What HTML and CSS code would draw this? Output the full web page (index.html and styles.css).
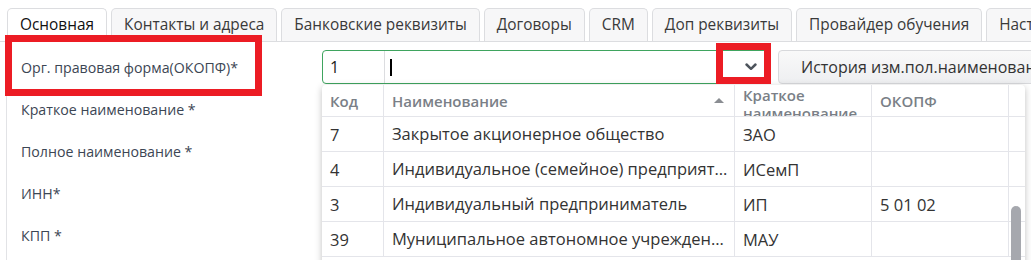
FILE: index.html
```html
<!DOCTYPE html>
<html lang="ru">
<head>
<meta charset="utf-8">
<link rel="stylesheet" href="styles.css">
</head>
<body>
<div class="page">
  <div class="tabs">
    <div class="tab active">Основная</div>
    <div class="tab">Контакты и адреса</div>
    <div class="tab">Банковские реквизиты</div>
    <div class="tab">Договоры</div>
    <div class="tab">CRM</div>
    <div class="tab">Доп реквизиты</div>
    <div class="tab">Провайдер обучения</div>
    <div class="tab">Настройки</div>
  </div>
  <div class="content">
    <div class="row">
      <div class="label">Орг. правовая форма(ОКОПФ)*</div>
      <div class="field">
        <div class="combo">
          <div class="combo-code">1</div>
          <div class="combo-text"><span class="caret"></span></div>
          <div class="combo-btn">
            <svg width="14" height="10" viewBox="0 0 14 10"><path d="M2.5 2.5 L7 6.8 L11.5 2.5" fill="none" stroke="#4d545c" stroke-width="2.5" stroke-linecap="round" stroke-linejoin="round"/></svg>
          </div>
        </div>
        <div class="history-btn">История изм.пол.наименования</div>
      </div>
    </div>
    <div class="row"><div class="label">Краткое наименование *</div></div>
    <div class="row"><div class="label">Полное наименование *</div></div>
    <div class="row"><div class="label">ИНН*</div></div>
    <div class="row"><div class="label">КПП *</div></div>
  </div>

  <div class="dropdown">
    <div class="grid">
      <div class="grid-row head">
        <div class="cell c-code">Код</div>
        <div class="cell c-name">Наименование<span class="sort"></span></div>
        <div class="cell c-short hdr-wrap">Краткое наименование</div>
        <div class="cell c-okopf">ОКОПФ</div>
        <div class="cell c-sb"></div>
      </div>
      <div class="grid-row">
        <div class="cell c-code">7</div>
        <div class="cell c-name">Закрытое акционерное общество</div>
        <div class="cell c-short">ЗАО</div>
        <div class="cell c-okopf"></div>
        <div class="cell c-sb"></div>
      </div>
      <div class="grid-row">
        <div class="cell c-code">4</div>
        <div class="cell c-name">Индивидуальное (семейное) предприятие</div>
        <div class="cell c-short">ИСемП</div>
        <div class="cell c-okopf"></div>
        <div class="cell c-sb"></div>
      </div>
      <div class="grid-row">
        <div class="cell c-code">3</div>
        <div class="cell c-name">Индивидуальный предприниматель</div>
        <div class="cell c-short">ИП</div>
        <div class="cell c-okopf">5 01 02</div>
        <div class="cell c-sb"></div>
      </div>
      <div class="grid-row">
        <div class="cell c-code">39</div>
        <div class="cell c-name">Муниципальное автономное учреждение</div>
        <div class="cell c-short">МАУ</div>
        <div class="cell c-okopf"></div>
        <div class="cell c-sb"></div>
      </div>
    </div>
    <div class="thumb"></div>
  </div>

  <div class="mark mark-label"></div>
  <div class="mark mark-chevron"></div>
</div>
</body>
</html>
```

FILE: styles.css
```css
html, body {
  margin: 0;
  padding: 0;
  background: #fff;
  overflow: hidden;
}
body {
  font-family: "Open Sans", "Noto Sans", sans-serif;
  font-size: 15px;
  color: #333;
}
.page {
  position: relative;
  width: 1031px;
  height: 260px;
  overflow: hidden;
}
.tabs {
  display: flex;
  gap: 4px;
  padding: 8px 0 0 7px;
  border-bottom: 1px solid #dcdde0;
  white-space: nowrap;
}
.tab {
  flex: none;
  height: 32px;
  line-height: 32px;
  padding: 0 12px;
  border: 1px solid #dcdde0;
  border-bottom: none;
  border-radius: 5px 5px 0 0;
  background: #f7f7f8;
  color: #3a3a3a;
  font-size: 15.4px;
}
.tab.active {
  background: #fff;
  color: #111;
}
.content {
  margin-left: 6px;
  border-left: 1px solid #e2e3e6;
  padding-top: 4px;
  height: 300px;
}
.row {
  display: flex;
  align-items: center;
  height: 42px;
}
.label {
  flex: none;
  width: 301px;
  padding-left: 14px;
  color: #3c4654;
  font-size: 14.2px;
}
.field {
  display: flex;
  align-items: center;
  gap: 8px;
}
.combo {
  flex: none;
  display: flex;
  width: 446px;
  height: 32px;
  border: 1px solid #3fa45f;
  border-radius: 4px;
  background: #fff;
}
.combo-code {
  width: 54px;
  padding-left: 7px;
  line-height: 32px;
  border-right: 1px solid #dcdde0;
  color: #222;
  font-size: 16px;
}
.combo-text {
  flex: 1;
  display: flex;
  align-items: center;
  padding-left: 5px;
}
.caret {
  width: 2px;
  height: 17px;
  background: #000;
}
.combo-btn {
  width: 36px;
  display: flex;
  align-items: center;
  justify-content: center;
}
.history-btn {
  flex: none;
  width: 300px;
  height: 32px;
  line-height: 32px;
  padding-left: 22px;
  border: 1px solid #d8d9dc;
  border-radius: 4px;
  background: linear-gradient(#f9f9f9, #eeeff1);
  color: #333;
  font-size: 16px;
  white-space: nowrap;
  overflow: hidden;
}

.dropdown {
  position: absolute;
  left: 322px;
  top: 85px;
  width: 703px;
  height: 200px;
  background: #fff;
  border-radius: 4px;
  box-shadow: 0 2px 7px rgba(0, 0, 0, 0.25);
  overflow: hidden;
}
.grid-row {
  display: flex;
  height: 34px;
  border-bottom: 1px solid #e4e5ea;
}
.grid-row.head {
  height: 31px;
}
.cell {
  flex: none;
  display: flex;
  align-items: center;
  padding: 0 8px;
  border-right: 1px solid #e4e5ea;
  white-space: nowrap;
  overflow: hidden;
  color: #333;
  font-size: 16.5px;
}
.grid-row:not(.head) .c-name {
  display: block;
  line-height: 34px;
  text-overflow: ellipsis;
  padding-right: 5px;
  width: 337px;
}
.head .cell {
  color: #7a7f87;
  font-weight: 600;
  font-size: 15px;
}
.c-code { width: 45px; }
.c-name { width: 334px; position: relative; }
.c-short { width: 120px; }
.c-okopf { width: 120px; }
.c-sb { width: 16px; padding: 0; border-right: none; }
.hdr-wrap {
  white-space: normal;
  align-items: flex-start;
  line-height: 18px;
  padding-top: 1px;
}
.sort {
  position: absolute;
  right: 10px;
  top: 13px;
  width: 0;
  height: 0;
  border-left: 5px solid transparent;
  border-right: 5px solid transparent;
  border-bottom: 5px solid #8a8d92;
}
.thumb {
  position: absolute;
  left: 689px;
  top: 121px;
  width: 10px;
  height: 80px;
  border-radius: 5px;
  background: #a6a8ae;
}

.mark {
  position: absolute;
  border: 7px solid #ec1c24;
}
.mark-label {
  left: 5px;
  top: 35px;
  width: 243px;
  height: 47px;
}
.mark-chevron {
  left: 716px;
  top: 43px;
  width: 41px;
  height: 27px;
}
```
